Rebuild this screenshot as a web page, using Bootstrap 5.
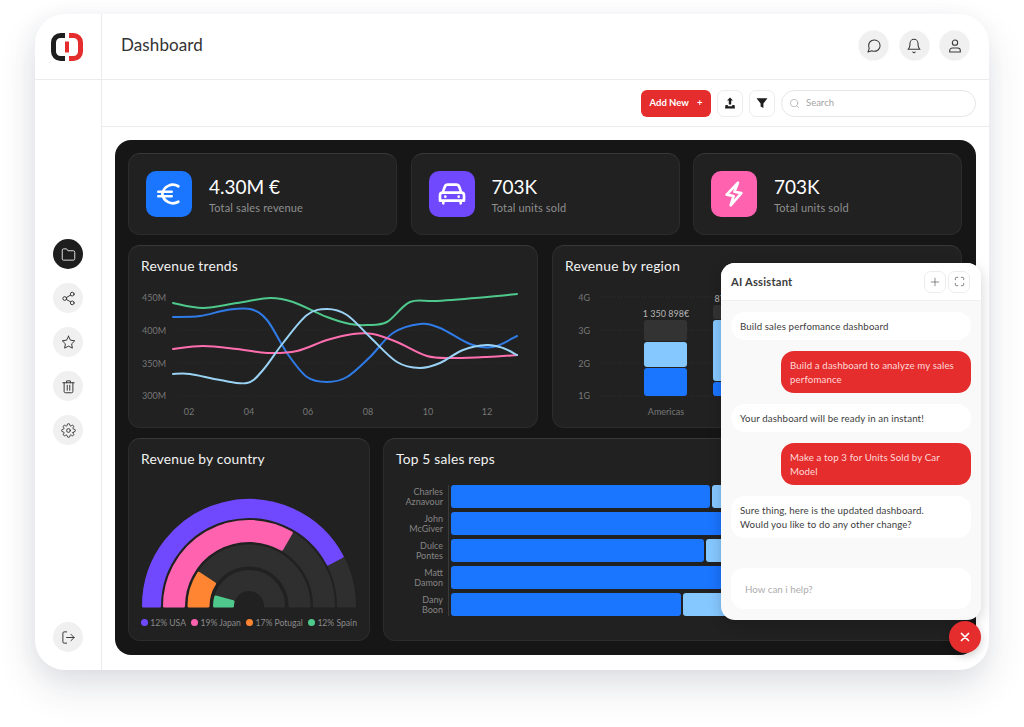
<!doctype html>
<html lang="en">
<head>
    <meta charset="utf-8">
    <meta name="viewport" content="width=device-width, initial-scale=1">
    <title>Dashboard</title>
    <link href="https://cdn.jsdelivr.net/npm/bootstrap@5.3.3/dist/css/bootstrap.min.css" rel="stylesheet">
    <style>
        body { background: #fff; font-family: "Lato", "Noto Sans", sans-serif; color: #333; overflow: hidden; min-height: 100vh; padding: 14px 0 0 35px; }
        svg { display: block; }
        .ico { fill: none; stroke: currentColor; stroke-width: 1.6; stroke-linecap: round; stroke-linejoin: round; }
        .ico-bold { stroke-width: 3.4; }

        /* app frame */
        .app-shell { width: 954px; height: 656px; background: #fff; border-radius: 30px; box-shadow: 0 18px 38px rgba(40, 50, 70, .13), -4px 4px 22px rgba(40, 50, 70, .05); }
        .side-rail { width: 67px; border-right: 1px solid #ebebec; }
        .logo-box { height: 66px; border-bottom: 1px solid #ebebec; padding-right: 3px; }
        .rail-body { padding: 159px 0 18px; }
        .round-btn { width: 30px; height: 30px; background: #f0f0f0; color: #3a3a3a; }
        .round-btn svg { width: 15px; height: 15px; }
        .round-btn.is-active { background: #1e1e1e; color: #ddd; }
        .top-bar { height: 66px; border-bottom: 1px solid #ebebec; padding: 0 20px 2px 19px; }
        .top-bar .round-btn { width: 29px; height: 29px; box-shadow: 0 0 2px rgba(0, 0, 0, .12); }
        .top-bar .round-btn svg { width: 16px; height: 16px; }
        .page-title { font-size: 17px; font-weight: 400; letter-spacing: .1px; margin: 0; }
        .tool-bar { height: 47px; border-bottom: 1px solid #ebebec; padding: 0 13px 0 0; gap: 6px; }
        .add-btn { width: 70px; height: 27px; padding: 1px 0 0; font-size: 9.5px; font-weight: 700; background: #e52d2d; border: 0; border-radius: 6px; color: #fff; gap: 8px; }
        .add-btn:hover { background: #e52d2d; color: #fff; }
        .square-btn { width: 26px; height: 27px; padding: 0; background: #fff; border: 1px solid #ececec; border-radius: 7px; color: #1e1e1e; }
        .search-box { width: 195px; height: 27px; border: 1px solid #e6e6e6; border-radius: 14px; padding: 1px 0 0 7px; gap: 6px; color: #aaa; }
        .search-box input { border: 0; outline: 0; padding: 0; width: 150px; font-size: 9.5px; background: transparent; }
        .search-box input::placeholder { color: #a5a5a5; }

        /* dark board */
        .dash-board { width: 861px; height: 515px; margin: 13px 0 0 13px; padding: 13px 14px 14px 13px; background: #161616; border-radius: 16px; gap: 10px; }
        .kpi-row { grid-template-columns: repeat(3, 1fr); column-gap: 13.5px; height: 82px; }
        .mid-row { grid-template-columns: 1fr 1fr; column-gap: 14px; height: 183px; }
        .low-row { grid-template-columns: 242px 1fr; column-gap: 13px; height: 203px; }
        .panel-dark { background: #212121; border: 1px solid #2c2c2c; border-top-color: #383838; border-radius: 12px; color: #fff; overflow: hidden; }
        .kpi-panel { padding: 0 17px; gap: 17px; flex-direction: row; align-items: center; }
        .kpi-icon { width: 46px; height: 46px; border-radius: 10px; color: #fff; }
        .kpi-icon svg { width: 32px; height: 32px; stroke-width: 2; }
        .kpi-blue { background: #1a75ff; }
        .kpi-purple { background: #7049ff; }
        .kpi-pink { background: #ff63b0; }
        .kpi-text { padding-top: 2px; }
        .kpi-value { font-size: 19px; line-height: 24px; }
        .kpi-label { font-size: 11px; line-height: 17px; color: #8f8f8f; letter-spacing: .15px; }
        .panel-title { font-size: 13.8px; line-height: 18px; font-weight: 400; letter-spacing: .2px; margin: 11px 12px 8px; color: #f2f2f2; }
        .axis-text { font: 9px "Lato", sans-serif; fill: #777; }
        .value-text { font: 9px "Lato", sans-serif; fill: #b5b5b5; }
        .pie-legend { padding: 0 12px; height: 28px; line-height: 22px; font-size: 8.6px; color: #8a8a8a; white-space: nowrap; }
        .pie-legend i { display: inline-block; width: 7px; height: 7px; border-radius: 50%; background: var(--dot); }
        .rep-list { margin-top: 9px; padding: 0 12px; gap: 4px; background: linear-gradient(#3a3a3a, #3a3a3a) 64px 0 / 1px 100% no-repeat; }
        .rep-name { width: 47px; margin-right: 6px; flex-shrink: 0; text-align: right; font-size: 9px; line-height: 10px; color: #858585; }
        .rep-row { height: 23px; gap: 2px; }
        .rep-blue, .rep-light { height: 23px; border-radius: 3px; flex-shrink: 0; }
        .rep-blue { background: #1a75ff; }
        .rep-light { background: #85c8ff; }

        /* assistant */
        .ai-panel { top: 249px; left: 686px; width: 260px; height: 357px; background: #f9f9f9; border-radius: 14px; box-shadow: 0 4px 14px rgba(0, 0, 0, .18); overflow: hidden; }
        .ai-head { height: 38px; background: #fff; border-bottom: 1px solid #f0f0f0; padding: 0 11px 0 10px; gap: 2px; }
        .ai-title { font-size: 11.2px; font-weight: 700; letter-spacing: .2px; color: #3c3c3c; padding-top: 1px; }
        .ai-head .square-btn { width: 22px; height: 22px; color: #555; }
        .ai-body { padding: 11px 10px; gap: 11px; font-size: 9.7px; line-height: 14px; letter-spacing: .12px; }
        .msg-bot { background: #fff; border-radius: 14px; padding: 7px 9px; color: #3d3d3d; }
        .msg-user { background: #e52d2d; border-radius: 13px; padding: 7px 9px; color: #ffd9d9; width: 190px; align-self: flex-end; }
        .ai-input { height: 41px; padding: 0 14px; background: #fff; border: 0; border-radius: 13px; font-size: 9.8px; color: #333; }
        .ai-input::placeholder { color: #adadad; }
        .close-fab { top: 607px; left: 914px; width: 32px; height: 32px; padding: 0; background: #e52d2d; border: 0; color: #fff; box-shadow: 0 3px 8px rgba(0, 0, 0, .2); }
        .close-fab:hover { background: #e52d2d; color: #fff; }
    </style>
</head>
<body>

<div class="app-shell d-flex position-relative">

    <!-- Barra lateral -->
    <aside class="side-rail d-flex flex-column flex-shrink-0">
        <div class="logo-box d-flex align-items-center justify-content-center">
            <svg width="32" height="28" viewBox="0 0 32 28" fill="none" stroke-width="5">
                <path d="M14 2.5H9.5a7 7 0 0 0-7 7v9a7 7 0 0 0 7 7H14" stroke="#1e1e1e"/>
                <path d="M18 2.5h4.5a7 7 0 0 1 7 7v9a7 7 0 0 1-7 7H18" stroke="#e52d2d"/>
                <path d="M16 8.5v11" stroke="#e52d2d" stroke-width="4"/>
            </svg>
        </div>
        <div class="rail-body d-flex flex-column flex-grow-1 justify-content-between align-items-center">
            <div class="d-flex flex-column" style="gap:14px">
                <a href="#" class="round-btn is-active rounded-circle d-flex align-items-center justify-content-center">
                    <svg class="ico" viewBox="0 0 24 24"><path d="M22 19a2 2 0 0 1-2 2H4a2 2 0 0 1-2-2V5a2 2 0 0 1 2-2h5l2 3h9a2 2 0 0 1 2 2z"/></svg>
                </a>
                <a href="#" class="round-btn rounded-circle d-flex align-items-center justify-content-center">
                    <svg class="ico" viewBox="0 0 24 24"><circle cx="18" cy="5" r="3"/><circle cx="6" cy="12" r="3"/><circle cx="18" cy="19" r="3"/><path d="M8.6 13.5l6.8 4M15.4 6.5l-6.8 4"/></svg>
                </a>
                <a href="#" class="round-btn rounded-circle d-flex align-items-center justify-content-center">
                    <svg class="ico" viewBox="0 0 24 24"><polygon points="12 2 15.09 8.26 22 9.27 17 14.14 18.18 21.02 12 17.77 5.82 21.02 7 14.14 2 9.27 8.91 8.26 12 2"/></svg>
                </a>
                <a href="#" class="round-btn rounded-circle d-flex align-items-center justify-content-center">
                    <svg class="ico" viewBox="0 0 24 24"><path d="M3 6h18M9 6V3h6v3M5 6v14a2 2 0 0 0 2 2h10a2 2 0 0 0 2-2V6M10 10v8M14 10v8"/></svg>
                </a>
                <a href="#" class="round-btn rounded-circle d-flex align-items-center justify-content-center">
                    <svg class="ico" viewBox="0 0 24 24"><circle cx="12" cy="12" r="3"/><path d="M19.4 15a1.65 1.65 0 0 0 .33 1.82l.06.06a2 2 0 0 1 0 2.83 2 2 0 0 1-2.83 0l-.06-.06a1.65 1.65 0 0 0-1.82-.33 1.65 1.65 0 0 0-1 1.51V21a2 2 0 0 1-2 2 2 2 0 0 1-2-2v-.09A1.65 1.65 0 0 0 9 19.4a1.65 1.65 0 0 0-1.82.33l-.06.06a2 2 0 0 1-2.83 0 2 2 0 0 1 0-2.83l.06-.06a1.65 1.65 0 0 0 .33-1.82 1.65 1.65 0 0 0-1.51-1H3a2 2 0 0 1-2-2 2 2 0 0 1 2-2h.09A1.65 1.65 0 0 0 4.6 9a1.65 1.65 0 0 0-.33-1.82l-.06-.06a2 2 0 0 1 0-2.83 2 2 0 0 1 2.83 0l.06.06a1.65 1.65 0 0 0 1.82.33H9a1.65 1.65 0 0 0 1-1.51V3a2 2 0 0 1 2-2 2 2 0 0 1 2 2v.09a1.65 1.65 0 0 0 1 1.51 1.65 1.65 0 0 0 1.82-.33l.06-.06a2 2 0 0 1 2.83 0 2 2 0 0 1 0 2.83l-.06.06a1.65 1.65 0 0 0-.33 1.82V9a1.65 1.65 0 0 0 1.51 1H21a2 2 0 0 1 2 2 2 2 0 0 1-2 2h-.09a1.65 1.65 0 0 0-1.51 1z"/></svg>
                </a>
            </div>
            <a href="#" class="round-btn rounded-circle d-flex align-items-center justify-content-center">
                <svg class="ico" viewBox="0 0 24 24"><path d="M9 21H5a2 2 0 0 1-2-2V5a2 2 0 0 1 2-2h4M16 17l5-5-5-5M21 12H9"/></svg>
            </a>
        </div>
    </aside>

    <main class="flex-grow-1 d-flex flex-column">
        <!-- Cabecera -->
        <header class="top-bar d-flex align-items-center justify-content-between">
            <h1 class="page-title">Dashboard</h1>
            <div class="d-flex" style="gap:11.5px">
                <a href="#" class="round-btn rounded-circle d-flex align-items-center justify-content-center">
                    <svg class="ico" viewBox="0 0 24 24"><path d="M21 11.5a8.38 8.38 0 0 1-.9 3.8 8.5 8.5 0 0 1-7.6 4.7 8.38 8.38 0 0 1-3.8-.9L3 21l1.9-5.7a8.38 8.38 0 0 1-.9-3.8 8.5 8.5 0 0 1 4.7-7.6 8.38 8.38 0 0 1 3.8-.9h.5a8.48 8.48 0 0 1 8 8v.5z"/></svg>
                </a>
                <a href="#" class="round-btn rounded-circle d-flex align-items-center justify-content-center">
                    <svg class="ico" viewBox="0 0 24 24"><path d="M18 8A6 6 0 0 0 6 8c0 7-3 9-3 9h18s-3-2-3-9M13.73 21a2 2 0 0 1-3.46 0"/></svg>
                </a>
                <a href="#" class="round-btn rounded-circle d-flex align-items-center justify-content-center">
                    <svg class="ico" viewBox="0 0 24 24"><path d="M20 21v-2a4 4 0 0 0-4-4H8a4 4 0 0 0-4 4v2z"/><circle cx="12" cy="7" r="4"/></svg>
                </a>
            </div>
        </header>

        <!-- Acciones -->
        <div class="tool-bar d-flex align-items-center justify-content-end">
            <button class="btn add-btn d-flex align-items-center justify-content-center">Add New <span>+</span></button>
            <button class="btn square-btn d-flex align-items-center justify-content-center">
                <svg width="12" height="12" viewBox="0 0 12 12" fill="currentColor"><path d="M6 .5l3 3H7.2v4H4.8v-4H3zM1.5 8h2.2v.6c0 .4.3.7.7.7h3.2c.4 0 .7-.3.7-.7V8h2.2l.5 3.5H1z"/></svg>
            </button>
            <button class="btn square-btn d-flex align-items-center justify-content-center">
                <svg width="12" height="12" viewBox="0 0 12 12" fill="currentColor"><path d="M.5 1.2h11L7.4 6.4v4.6L4.6 9.4v-3z"/></svg>
            </button>
            <div class="search-box d-flex align-items-center">
                <svg class="ico" width="11" height="11" viewBox="0 0 24 24"><circle cx="11" cy="11" r="8"/><path d="M21 21l-4.3-4.3"/></svg>
                <input type="text" placeholder="Search">
            </div>
        </div>

        <!-- Panel oscuro -->
        <section class="dash-board d-flex flex-column">
            <div class="d-grid kpi-row">
                <div class="card panel-dark kpi-panel">
                    <div class="kpi-icon kpi-blue d-flex align-items-center justify-content-center">
                        <svg class="ico" viewBox="0 0 24 24"><path d="M19 6.2A8 8 0 0 0 7 12a8 8 0 0 0 12 5.8M4 10.3h10M4 13.7h10"/></svg>
                    </div>
                    <div class="kpi-text">
                        <div class="kpi-value">4.30M €</div>
                        <div class="kpi-label">Total sales revenue</div>
                    </div>
                </div>
                <div class="card panel-dark kpi-panel">
                    <div class="kpi-icon kpi-purple d-flex align-items-center justify-content-center">
                        <svg class="ico" viewBox="0 0 24 24"><path d="M5 11l1.6-4.4A2.4 2.4 0 0 1 8.8 5h6.4a2.4 2.4 0 0 1 2.2 1.6L19 11M5 11h14a2 2 0 0 1 2 2v4H3v-4a2 2 0 0 1 2-2zM5.5 17v2M18.5 17v2M7 14h.01M17 14h.01"/></svg>
                    </div>
                    <div class="kpi-text">
                        <div class="kpi-value">703K</div>
                        <div class="kpi-label">Total units sold</div>
                    </div>
                </div>
                <div class="card panel-dark kpi-panel">
                    <div class="kpi-icon kpi-pink d-flex align-items-center justify-content-center">
                        <svg class="ico" viewBox="0 0 24 24"><path d="M15 3.5L6.5 12.5l5.2 1-2.2 7 8-9.2-5.2-1z"/></svg>
                    </div>
                    <div class="kpi-text">
                        <div class="kpi-value">703K</div>
                        <div class="kpi-label">Total units sold</div>
                    </div>
                </div>
            </div>

            <div class="d-grid mid-row">
                <div class="card panel-dark">
                    <h2 class="panel-title">Revenue trends</h2>
                    <svg id="trend-chart" width="408" height="144" viewBox="129 283 408 144">
                        <g stroke="#2d2d2d" stroke-dasharray="1 2">
                            <line x1="178" x2="517" y1="297" y2="297"/><line x1="178" x2="517" y1="330" y2="330"/>
                            <line x1="178" x2="517" y1="363" y2="363"/><line x1="178" x2="517" y1="396" y2="396"/>
                        </g>
                        <g class="axis-text" text-anchor="end">
                            <text x="166" y="301">450M</text><text x="166" y="334">400M</text>
                            <text x="166" y="367">350M</text><text x="166" y="399">300M</text>
                        </g>
                        <g class="axis-text" text-anchor="middle">
                            <text x="189" y="415">02</text><text x="249" y="415">04</text><text x="308" y="415">06</text>
                            <text x="368" y="415">08</text><text x="428" y="415">10</text><text x="487" y="415">12</text>
                        </g>
                    </svg>
                </div>
                <div class="card panel-dark">
                    <h2 class="panel-title">Revenue by region</h2>
                    <svg width="408" height="144" viewBox="553 283 408 144">
                        <g stroke="#333" stroke-dasharray="1 2">
                            <line x1="600" x2="950" y1="297" y2="297"/><line x1="600" x2="950" y1="330" y2="330"/>
                            <line x1="600" x2="950" y1="363" y2="363"/><line x1="600" x2="950" y1="396" y2="396"/>
                        </g>
                        <g class="axis-text" text-anchor="end">
                            <text x="590" y="301">4G</text><text x="590" y="334">3G</text>
                            <text x="590" y="367">2G</text><text x="590" y="399">1G</text>
                        </g>
                        <rect x="644" y="320" width="43" height="21" rx="3" fill="#333"/>
                        <rect x="644" y="342" width="43" height="25" rx="3" fill="#85c8ff"/>
                        <rect x="644" y="368" width="43" height="28" rx="3" fill="#1a75ff"/>
                        <text class="value-text" x="666" y="317" text-anchor="middle">1 350 898€</text>
                        <text class="axis-text" x="666" y="415" text-anchor="middle">Americas</text>
                        <rect x="713" y="305" width="43" height="14" rx="3" fill="#333"/>
                        <rect x="713" y="320" width="43" height="61" rx="3" fill="#85c8ff"/>
                        <rect x="713" y="382" width="43" height="14" rx="3" fill="#1a75ff"/>
                        <text class="value-text" x="734" y="302" text-anchor="middle">870 000€</text>
                    </svg>
                </div>
            </div>

            <div class="d-grid low-row">
                <div class="card panel-dark">
                    <h2 class="panel-title">Revenue by country</h2>
                    <svg id="gauge-chart" width="240" height="136" viewBox="129 476 240 136"></svg>
                    <div class="pie-legend d-flex justify-content-between">
                        <span><i style="--dot:#7049ff"></i> 12% USA</span>
                        <span><i style="--dot:#ff63b0"></i> 19% Japan</span>
                        <span><i style="--dot:#ff8533"></i> 17% Potugal</span>
                        <span><i style="--dot:#4fc88c"></i> 12% Spain</span>
                    </div>
                </div>
                <div class="card panel-dark">
                    <h2 class="panel-title">Top 5 sales reps</h2>
                    <div id="rep-list" class="rep-list d-flex flex-column"></div>
                </div>
            </div>
        </section>
    </main>

    <!-- Asistente -->
    <div class="ai-panel position-absolute d-flex flex-column">
        <div class="ai-head d-flex align-items-center">
            <span class="ai-title me-auto">AI Assistant</span>
            <button class="btn square-btn d-flex align-items-center justify-content-center">
                <svg class="ico" width="10" height="10" viewBox="0 0 24 24"><path d="M12 3v18M3 12h18"/></svg>
            </button>
            <button class="btn square-btn d-flex align-items-center justify-content-center">
                <svg class="ico" width="11" height="11" viewBox="0 0 24 24"><path d="M8 3H5a2 2 0 0 0-2 2v3M16 3h3a2 2 0 0 1 2 2v3M8 21H5a2 2 0 0 1-2-2v-3M16 21h3a2 2 0 0 0 2-2v-3"/></svg>
            </button>
        </div>
        <div class="ai-body d-flex flex-column flex-grow-1">
            <div class="msg-bot">Build sales perfomance dashboard</div>
            <div class="msg-user">Build a dashboard to analyze my sales perfomance</div>
            <div class="msg-bot">Your dashboard will be ready in an instant!</div>
            <div class="msg-user">Make a top 3 for Units Sold by Car Model</div>
            <div class="msg-bot">Sure thing, here is the updated dashboard.<br>Would you like to do any other change?</div>
            <input class="ai-input mt-auto" type="text" placeholder="How can i help?">
        </div>
    </div>
    <button class="btn close-fab position-absolute rounded-circle d-flex align-items-center justify-content-center">
        <svg class="ico ico-bold" width="12" height="12" viewBox="0 0 24 24"><path d="M5 5l14 14M19 5L5 19"/></svg>
    </button>
</div>

<script src="https://cdn.jsdelivr.net/npm/bootstrap@5.3.3/dist/js/bootstrap.bundle.min.js"></script>
<script>
    const SVG_NS = "http://www.w3.org/2000/svg";

    const addPath = (svg, d, attrs) => {
        const path = document.createElementNS(SVG_NS, "path");
        path.setAttribute("d", d);
        Object.entries(attrs).forEach(([k, v]) => path.setAttribute(k, v));
        svg.appendChild(path);
    };

    // Curva suave (catmull-rom) a partir de los puntos
    const smoothLine = (pts) => {
        let d = `M${pts[0][0]} ${pts[0][1]}`;
        for (let i = 0; i < pts.length - 1; i++) {
            const p0 = pts[i - 1] || pts[i], p1 = pts[i], p2 = pts[i + 1], p3 = pts[i + 2] || p2;
            const c1 = [p1[0] + (p2[0] - p0[0]) / 6, p1[1] + (p2[1] - p0[1]) / 6];
            const c2 = [p2[0] - (p3[0] - p1[0]) / 6, p2[1] - (p3[1] - p1[1]) / 6];
            d += `C${c1[0]} ${c1[1]} ${c2[0]} ${c2[1]} ${p2[0]} ${p2[1]}`;
        }
        return d;
    };

    const trends = [
        ["#4fc88c", [[173,303],[203,308],[237,303],[270,298],[293,302],[327,317],[350,324],[367,325],[387,322],[410,302],[437,301],[487,297],[517,294]]],
        ["#2f7be8", [[173,317],[200,316],[227,310],[250,309],[267,320],[287,353],[307,377],[327,382],[347,377],[370,357],[393,333],[420,324],[440,328],[470,344],[493,347],[517,336]]],
        ["#ff6fb0", [[173,349],[203,346],[237,349],[267,353],[297,351],[327,340],[353,334],[373,334],[397,342],[427,356],[453,358],[487,357],[517,355]]],
        ["#9ad3f5", [[173,374],[190,374],[220,380],[247,383],[263,370],[283,343],[307,315],[327,309],[347,315],[370,337],[397,362],[420,368],[440,363],[463,350],[487,345],[503,348],[517,355]]]
    ];
    const trendSvg = document.querySelector("#trend-chart");
    trends.forEach(([color, pts]) => {
        addPath(trendSvg, smoothLine(pts), { fill: "none", stroke: color, "stroke-width": 2, "stroke-linecap": "round" });
    });

    // Sector de anillo, angulos en grados desde la izquierda
    const ringSector = (cx, cy, r0, r1, from, to) => {
        const pt = (r, a) => {
            const t = Math.PI - a * Math.PI / 180;
            return `${cx + r * Math.cos(t)} ${cy - r * Math.sin(t)}`;
        };
        const big = to - from > 180 ? 1 : 0;
        return `M${pt(r1, from)}A${r1} ${r1} 0 ${big} 1 ${pt(r1, to)}L${pt(r0, to)}A${r0} ${r0} 0 ${big} 0 ${pt(r0, from)}Z`;
    };

    const gauge = [
        [88, 107, 152, "#7049ff"],
        [64, 86, 120, "#ff63b0"],
        [39.5, 61.5, 33, "#ff8533"],
        [15, 36, 15, "#4fc88c"]
    ];
    const gaugeSvg = document.querySelector("#gauge-chart");
    gauge.forEach(([r0, r1, sweep, color]) => {
        const track = ringSector(249, 606, r0 + 1.5, r1 - 1.5, 0, 180);
        addPath(gaugeSvg, track, { fill: "#2f2f2f", stroke: "#2f2f2f", "stroke-width": 3, "stroke-linejoin": "round" });
        addPath(gaugeSvg, ringSector(249, 606, r0 + 1.5, r1 - 1.5, 0, sweep), { fill: color, stroke: color, "stroke-width": 3, "stroke-linejoin": "round" });
    });

    const reps = [
        ["Charles", "Aznavour", 259, 200],
        ["John", "McGiver", 300, 160],
        ["Dulce", "Pontes", 253, 206],
        ["Matt", "Damon", 300, 160],
        ["Dany", "Boon", 230, 229]
    ];
    document.querySelector("#rep-list").innerHTML = reps.map(([a, b, blue, light]) => `
        <div class="rep-row d-flex align-items-center">
            <div class="rep-name">${a}<br>${b}</div>
            <div class="rep-blue" style="width:${blue}px"></div>
            <div class="rep-light" style="width:${light}px"></div>
        </div>`).join("");
</script>

</body>
</html>
